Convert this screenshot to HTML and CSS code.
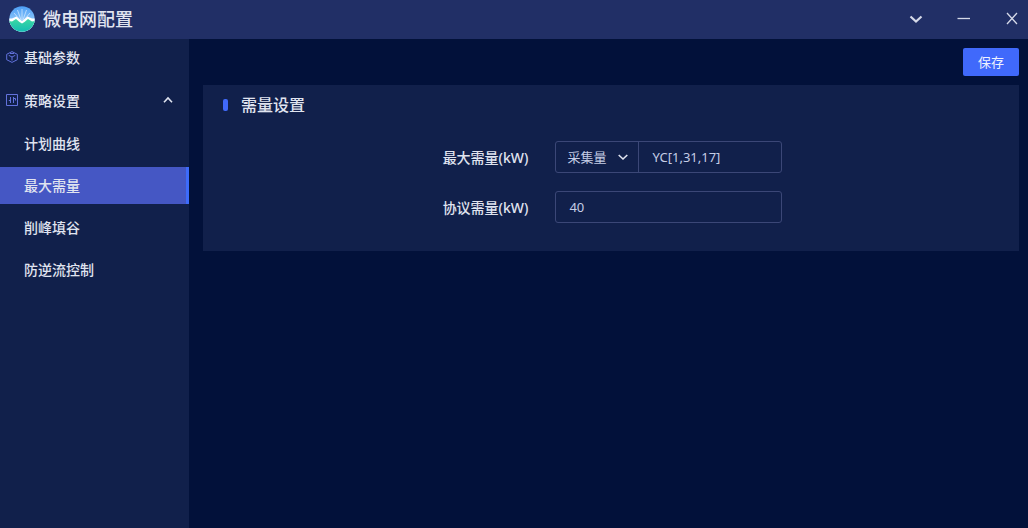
FILE: index.html
```html
<!DOCTYPE html>
<html lang="zh-CN">
<head>
<meta charset="utf-8">
<meta name="viewport" content="width=device-width, initial-scale=1">
<title>微电网配置</title>
<link rel="stylesheet" href="styles.css">
</head>
<body>
<div class="app">
  <header class="titlebar">
    <svg class="logo" viewBox="0 0 26 26" aria-hidden="true">
      <defs>
        <linearGradient id="sky" x1="0" y1="0" x2="0" y2="1"><stop offset="0" stop-color="#4a9df5"/><stop offset=".55" stop-color="#8cc6fa"/></linearGradient>
        <linearGradient id="land" x1="0" y1="0" x2="0" y2="1"><stop offset="0" stop-color="#3cd8a2"/><stop offset="1" stop-color="#14bcb4"/></linearGradient>
        <clipPath id="disc"><circle cx="13" cy="13" r="12.7"/></clipPath>
      </defs>
      <g clip-path="url(#disc)">
        <rect width="26" height="26" fill="url(#sky)"/>
        <path d="M13 14V3M12 14L8.500 4M14 14L17.500 4M11 14L5 7M15 14L21 7" stroke="#d8edff" stroke-width=".7" fill="none"/>
        <path d="M0 12.500L3 12.500L7.500 10.500L11 13.500L13 15L15 13.500L18.500 10.500L23 12.500L26 12.500V26H0Z" fill="#fff"/>
        <path d="M0 15L3 15.500L7 13L10.500 16L13 17.500L15.500 16L19 13L23 15.500L26 15V26H0Z" fill="url(#land)"/>
      </g>
    </svg>
    <h1 class="title">微电网配置</h1>
    <div class="window-actions">
      <button class="window-button" type="button" aria-label="展开">
        <svg class="window-icon" viewBox="0 0 14 14"><path class="bold" d="M1.500 4.500L7 9.500L12.500 4.500"/></svg>
      </button>
      <button class="window-button" type="button" aria-label="最小化">
        <svg class="window-icon" viewBox="0 0 14 14"><path d="M.5 6.500H13" stroke-width="1.700"/></svg>
      </button>
      <button class="window-button" type="button" aria-label="关闭">
        <svg class="window-icon" viewBox="0 0 14 14"><path d="M2 1L12 12M12 1L2 12"/></svg>
      </button>
    </div>
  </header>
  <div class="body">
    <nav class="sidebar">
      <ul class="menu">
        <li>
          <a class="item" href="#base">
            <svg class="item-icon" viewBox="0 0 12 12" aria-hidden="true"><path d="M6 .6L11.300 3.300V8.700L6 11.400L.7 8.700V3.300ZM2.700 4.300L6 6L9.300 4.300M6 6V9.500M4 2.500L8 2.500"/></svg>
            基础参数
          </a>
        </li>
        <li>
          <a class="item" href="#strategy">
            <svg class="item-icon" viewBox="0 0 12 12" aria-hidden="true"><path d="M.5 .5H11.500V11.500H.5ZM4.500 3V9M2.800 6.500H4.500M7.500 3V9M7.500 4.500H9.500V6.500"/></svg>
            策略设置
            <svg class="arrow" viewBox="0 0 10 10" aria-hidden="true"><path d="M1 7.300L5 3L9 7.300"/></svg>
          </a>
          <ul class="menu submenu">
            <li><a class="item" href="#curve">计划曲线</a></li>
            <li><a class="item active" href="#demand" aria-current="page">最大需量</a></li>
            <li><a class="item" href="#peak">削峰填谷</a></li>
            <li><a class="item" href="#reverse">防逆流控制</a></li>
          </ul>
        </li>
      </ul>
    </nav>
    <main class="content">
      <div class="toolbar"><button class="save" type="button">保存</button></div>
      <section class="panel">
        <h2 class="panel-title">需量设置</h2>
        <form class="form">
          <label class="label" for="max">最大需量(kW)</label>
          <div class="control">
            <div class="select-wrap">
              <select class="select" aria-label="数据来源"><option>采集量</option></select>
              <svg class="arrow select-arrow" viewBox="0 0 10 10" aria-hidden="true"><path d="M.7 3L5 7L9.300 3"/></svg>
            </div>
            <input class="input" id="max" type="text" value="YC[1,31,17]">
          </div>
          <label class="label" for="contract">协议需量(kW)</label>
          <div class="control"><input class="input" id="contract" type="text" value="40"></div>
        </form>
      </section>
    </main>
  </div>
</div>
</body>
</html>
```
FILE: styles.css
```css
* { box-sizing: border-box; }

body {
  margin: 0;
  background: #02113a;
  color: #e0e4f0;
  font-family: "Noto Sans", "Noto Sans CJK SC", sans-serif;
  font-size: 14px;
}

button, input, select { font: inherit; color: inherit; }

.app { display: flex; flex-direction: column; min-height: 100vh; }

.titlebar {
  display: flex;
  align-items: center;
  height: 39px;
  padding: 0 9px 2px;
  background: #212f66;
}
.logo { width: 26px; height: 26px; }
.title { margin: 0 0 0 8px; font-size: 18px; line-height: 26px; font-weight: 500; }
.window-actions { display: flex; gap: 34px; margin-left: auto; }
.window-button {
  display: flex;
  padding: 0;
  border: 0;
  background: none;
}
.window-icon { width: 14px; height: 14px; }
.window-icon path { fill: none; stroke: #d5d9e8; stroke-width: 1.3; }
.window-icon .bold { stroke-width: 2.2; }

.body { display: flex; flex: 1; }

.sidebar { flex: 0 0 189px; background: #11204b; }
.menu { display: grid; gap: 6px; margin: 0; padding: 0; list-style: none; }
.submenu { gap: 5px; margin-top: 6px; }
.item {
  display: flex;
  align-items: center;
  height: 37px;
  padding: 0 16px 1px 24px;
  color: #e0e4f0;
  font-weight: 500;
  text-decoration: none;
}
.item.active { background: #4557c4; border-right: 3px solid #3d6bfb; }
.item-icon { width: 12px; height: 12px; margin: 0 6px 0 -18px; }
.item-icon path { fill: none; stroke: #6272dc; stroke-width: 1; }
.arrow { width: 10px; height: 10px; }
.arrow path { fill: none; stroke: #e0e4f0; stroke-width: 1.6; }
.item .arrow { margin-left: auto; }

.content { flex: 1; min-width: 0; padding: 9px 9px 9px 14px; }
.toolbar { display: flex; justify-content: flex-end; margin-bottom: 9px; }
.save {
  height: 28px;
  padding: 0 15px 1px;
  border: 0;
  border-radius: 2px;
  background: #4069fb;
  color: #eef2ff;
  font-size: 13px;
}

.panel { padding: 8px 20px 28px; background: #11204b; }
.panel-title {
  display: flex;
  align-items: center;
  gap: 13px;
  margin: 0 0 24px;
  font-size: 16px;
  line-height: 24px;
  font-weight: 500;
}
.panel-title::before {
  content: "";
  width: 5px;
  height: 12px;
  border-radius: 2px;
  background: #4069fb;
}
.form {
  display: grid;
  grid-template-columns: auto 227px;
  justify-content: center;
  align-items: center;
  gap: 18px 27px;
  padding-left: 3px;
}
.label { font-weight: 500; }
.control {
  display: flex;
  height: 32px;
  border: 1px solid #3b4777;
  border-radius: 3px;
  color: #c5cde6;
}
.select-wrap { position: relative; flex: 0 0 83px; border-right: 1px solid #3b4777; }
.select {
  appearance: none;
  width: 100%;
  height: 100%;
  padding: 0 24px 0 11px;
  border: 0;
  background: none;
  font-size: 13px;
}
.select-arrow { position: absolute; top: 10px; right: 10px; pointer-events: none; }
.input {
  flex: 1;
  min-width: 0;
  padding: 0 13px;
  border: 0;
  background: none;
  font-size: 13px;
}
```
